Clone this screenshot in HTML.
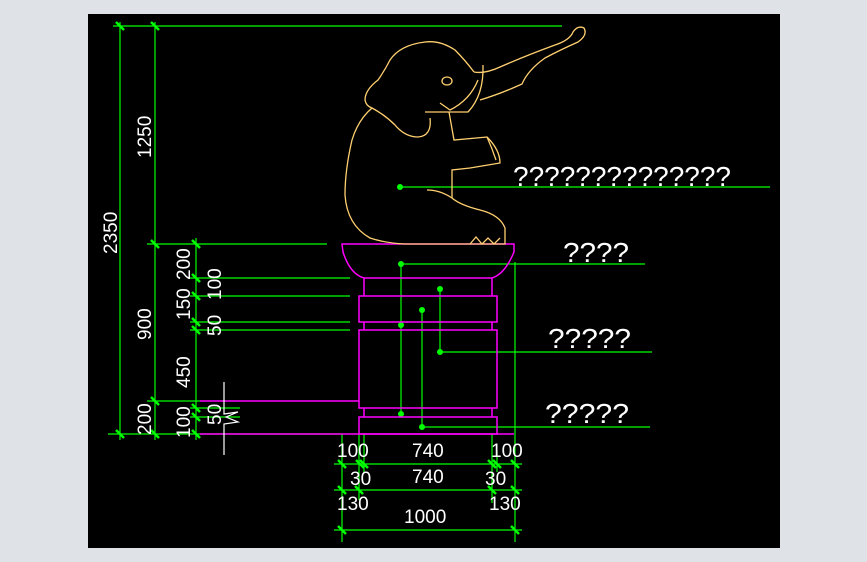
<!DOCTYPE html>
<html><head><meta charset="utf-8"><style>
html,body{margin:0;padding:0;background:#dfe3e7;width:867px;height:562px;overflow:hidden}
svg{display:block}
text{font-family:"Liberation Sans",sans-serif;fill:#fff}
</style></head><body>
<svg width="867" height="562" viewBox="0 0 867 562">
<rect x="0" y="0" width="867" height="562" fill="#dfe3e7"/>
<rect x="88" y="14" width="692" height="534" fill="#000"/>
<!-- green dims -->
<g stroke="#00ff00" stroke-width="1.2" fill="none">
<line x1="113" y1="26" x2="562" y2="26"/>
<line x1="120" y1="22" x2="120" y2="440"/>
<line x1="155" y1="22" x2="155" y2="440"/>
<line x1="196" y1="238" x2="196" y2="440"/>
<line x1="147" y1="244" x2="327" y2="244"/>
<line x1="190" y1="278" x2="350" y2="278"/>
<line x1="190" y1="296" x2="350" y2="296"/>
<line x1="190" y1="322" x2="350" y2="322"/>
<line x1="190" y1="330" x2="350" y2="330"/>
<line x1="147" y1="401" x2="200" y2="401"/>
<line x1="190" y1="408" x2="240" y2="408"/>
<line x1="190" y1="417" x2="240" y2="417"/>
<line x1="108" y1="434" x2="342" y2="434"/>
<line x1="342" y1="434" x2="342" y2="542"/>
<line x1="364" y1="434" x2="364" y2="472"/>
<line x1="359" y1="434" x2="359" y2="500"/>
<line x1="492" y1="434" x2="492" y2="503"/>
<line x1="497" y1="450" x2="497" y2="472"/>
<line x1="515" y1="262" x2="515" y2="542"/>
<line x1="334" y1="464" x2="522" y2="464"/>
<line x1="334" y1="490" x2="522" y2="490"/>
<line x1="334" y1="530" x2="522" y2="530"/>
<!-- leaders -->
<line x1="400" y1="187" x2="770" y2="187"/>
<line x1="401" y1="264" x2="645" y2="264"/>
<line x1="401" y1="264" x2="401" y2="414"/>
<line x1="440" y1="289" x2="440" y2="352"/>
<line x1="440" y1="352" x2="652" y2="352"/>
<line x1="422" y1="310" x2="422" y2="427"/>
<line x1="422" y1="427" x2="650" y2="427"/>
</g>
<g fill="#00ff00">
<circle cx="400" cy="187" r="3"/><circle cx="401" cy="264" r="3"/><circle cx="401" cy="325" r="3"/><circle cx="401" cy="414" r="3"/>
<circle cx="440" cy="289" r="3"/><circle cx="440" cy="352" r="3"/><circle cx="422" cy="310" r="3"/><circle cx="422" cy="427" r="3"/>
</g>
<g stroke="#00ff00" stroke-width="2.5">
<line x1="116" y1="22" x2="124" y2="30"/><line x1="151" y1="22" x2="159" y2="30"/>
<line x1="151" y1="240" x2="159" y2="248"/><line x1="192" y1="240" x2="200" y2="248"/>
<line x1="192" y1="274" x2="200" y2="282"/><line x1="192" y1="292" x2="200" y2="300"/>
<line x1="192" y1="318" x2="200" y2="326"/><line x1="192" y1="326" x2="200" y2="334"/>
<line x1="151" y1="397" x2="159" y2="405"/><line x1="192" y1="404" x2="200" y2="412"/><line x1="192" y1="413" x2="200" y2="421"/>
<line x1="116" y1="430" x2="124" y2="438"/><line x1="151" y1="430" x2="159" y2="438"/><line x1="192" y1="430" x2="200" y2="438"/>
<line x1="338" y1="460" x2="346" y2="468"/><line x1="356" y1="460" x2="364" y2="468"/><line x1="360" y1="460" x2="368" y2="468"/>
<line x1="488" y1="460" x2="496" y2="468"/><line x1="493" y1="460" x2="501" y2="468"/><line x1="511" y1="460" x2="519" y2="468"/>
<line x1="338" y1="486" x2="346" y2="494"/><line x1="355" y1="486" x2="363" y2="494"/><line x1="488" y1="486" x2="496" y2="494"/><line x1="511" y1="486" x2="519" y2="494"/>
<line x1="338" y1="526" x2="346" y2="534"/><line x1="511" y1="526" x2="519" y2="534"/>
</g>
<!-- pedestal -->
<g stroke="#ff00ff" stroke-width="1.5" fill="none">
<path d="M342 244 H514 V252 Q505 274 492 278 H364 Q350 274 343 252 Z"/>
<path d="M364 278 V296 M492 278 V296"/>
<rect x="359" y="296" width="138" height="26"/>
<path d="M364 322 V330 M492 322 V330"/>
<rect x="359" y="330" width="138" height="78"/>
<path d="M364 408 V417 M492 408 V417"/>
<rect x="359" y="417" width="138" height="17"/>
<line x1="200" y1="434" x2="514" y2="434"/>
<line x1="200" y1="401" x2="359" y2="401"/>
</g>
<!-- break line -->
<g stroke="#fff" stroke-width="1.2" fill="none">
<path d="M224 382 V414 L238 412 L226 417 L238 422 L224 424 V455"/>
</g>
<!-- elephant -->
<g stroke="#ffd070" stroke-width="1.3" fill="none">
<path d="M474 72 Q465 60 455 50 Q440 40 425 42 Q400 45 390 60 Q385 70 378 80 Q365 90 365 100 Q366 106 372 108 Q385 115 395 125 Q405 137 418 137 Q432 136 430 118"/>
<path d="M474 72 Q485 74 500 67 Q525 56 555 45 Q570 40 573 32 Q578 25 584 28 Q588 35 578 42 Q560 50 545 58 Q528 70 522 84 Q500 94 480 100"/>
<path d="M483 65 Q484 95 468 112 L455 112 M425 112 L468 112"/>
<path d="M478 80 Q470 100 450 110 L440 103"/>
<ellipse cx="447" cy="81" rx="5" ry="4"/>
<path d="M372 108 Q358 120 352 140 Q345 170 345 195 Q347 225 370 238 Q385 243 405 244 L505 244 V228 Q500 215 480 210 Q460 205 452 198 Q440 190 427 190"/>
<path d="M449 112 L454 140 L487 137 Q500 150 500 163 L470 168 L452 170 L452 198"/>
<path d="M487 137 Q492 148 496 160"/>
<path d="M470 244 L476 237 L482 244 L488 238 L494 244 L500 238"/>
</g>
<!-- question text -->
<g font-size="28">
<text x="513" y="186" textLength="218" lengthAdjust="spacingAndGlyphs">??????????????</text>
<text x="563" y="262" textLength="66" lengthAdjust="spacingAndGlyphs">????</text>
<text x="548" y="348" textLength="83" lengthAdjust="spacingAndGlyphs">?????</text>
<text x="545" y="423" textLength="84" lengthAdjust="spacingAndGlyphs">?????</text>
</g>
<!-- dim text -->
<g font-size="19">
<text x="337" y="457">100</text><text x="412" y="457">740</text><text x="491" y="457">100</text>
<text x="350" y="485">30</text><text x="412" y="483">740</text><text x="485" y="485">30</text>
<text x="337" y="510">130</text><text x="404" y="523">1000</text><text x="489" y="510">130</text>
</g>
<g font-size="19">
<text transform="translate(117,254) rotate(-90)">2350</text>
<text transform="translate(151,158) rotate(-90)">1250</text>
<text transform="translate(151,340) rotate(-90)">900</text>
<text transform="translate(151,435) rotate(-90)">200</text>
<text transform="translate(190,280) rotate(-90)">200</text>
<text transform="translate(190,320) rotate(-90)">150</text>
<text transform="translate(190,388) rotate(-90)">450</text>
<text transform="translate(190,438) rotate(-90)">100</text>
<text transform="translate(221,300) rotate(-90)">100</text>
<text transform="translate(221,336) rotate(-90)">50</text>
<text transform="translate(221,425) rotate(-90)">50</text>
</g>
</svg>
</body></html>
